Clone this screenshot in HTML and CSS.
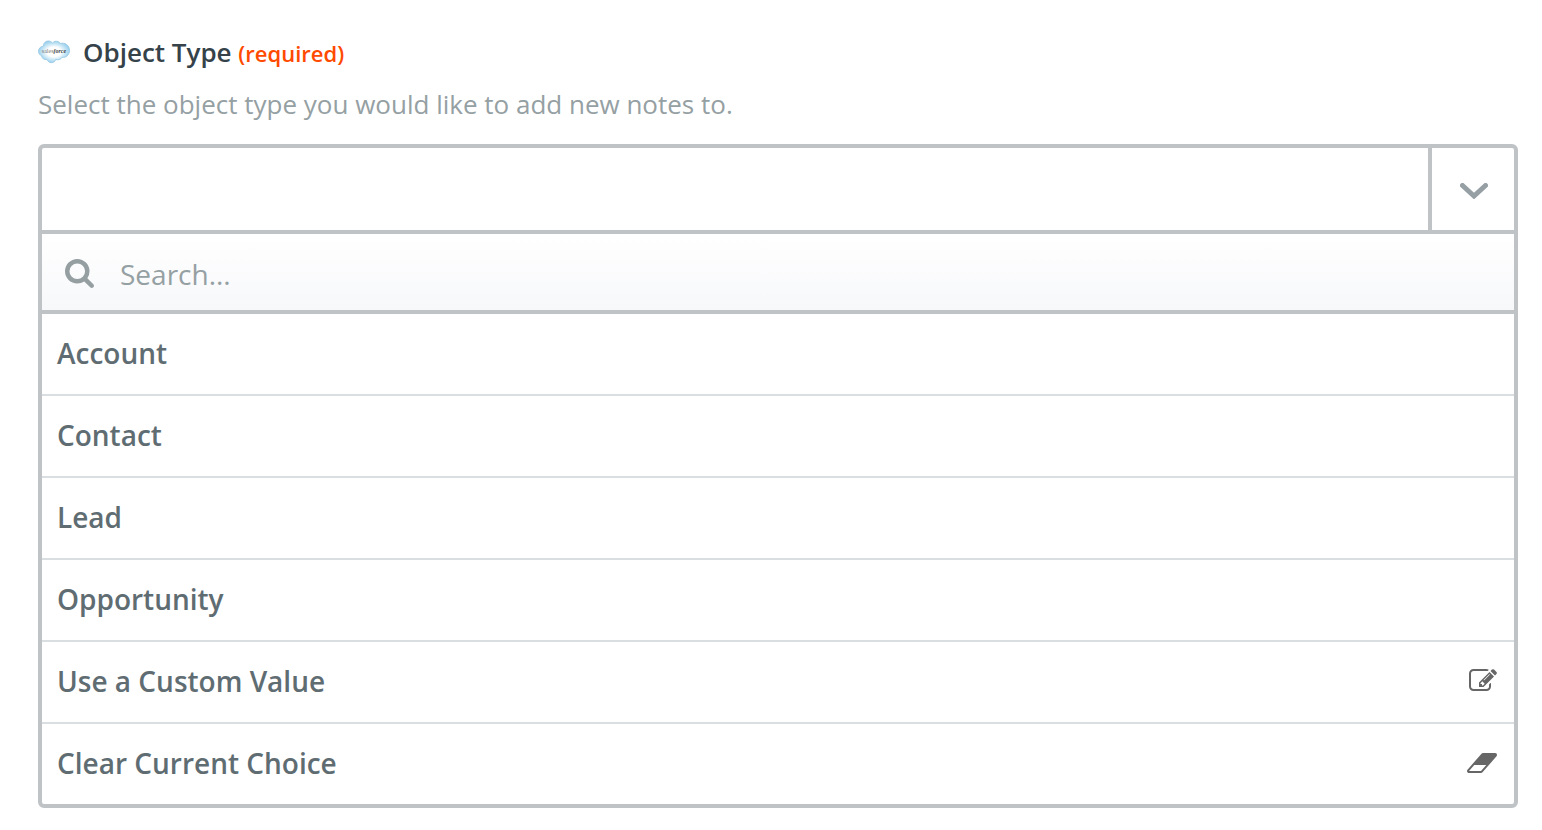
FILE: index.html
```html
<!DOCTYPE html>
<html lang="en">
<head>
<meta charset="utf-8">
<title>Object Type</title>
<link rel="stylesheet" href="styles.css">
</head>
<body>
<main class="field">
  <div class="field-head">
    <svg class="logo" viewBox="0 0 32 24" aria-hidden="true">
      <defs>
        <radialGradient id="cloud" cx="50%" cy="50%" r="55%">
          <stop offset="0.4" stop-color="#ffffff"/>
          <stop offset="0.7" stop-color="#c3e4f5"/>
          <stop offset="1" stop-color="#8cc8e8"/>
        </radialGradient>
      </defs>
      <path d="M5.500 6C5.500 2.500 8 1 10.500 1C12.500 1 13.500 2 14.500 3C15.500 1.800 17 1.200 18.500 1.300C20.500 1.400 21.500 2.200 22.300 3.600C27 2 31.500 5.500 31.500 10.300C31.500 15 28 18 24 17.200C23.200 19.300 20 20.500 17.800 19.400C16.500 23.500 10.500 24 9 19.300C6 20 3.800 18.300 3.700 15.800C1.600 15 .5 13.200 .5 11.200C.5 8.600 2.500 6.500 5.500 6Z" fill="url(#cloud)" stroke="#9dcde8"/>
      <text class="logo-text" x="16" y="13" text-anchor="middle">sales<tspan class="logo-force">force</tspan></text>
    </svg>
    <label class="field-label" for="object-type">Object Type <span class="required">(required)</span></label>
  </div>
  <p class="hint">Select the object type you would like to add new notes to.</p>
  <div class="picker">
    <div class="picker-value">
      <input class="value-input" id="object-type" type="text" readonly>
      <button class="toggle" type="button" aria-label="Toggle choices" aria-expanded="true">
        <svg class="chevron" viewBox="0 0 28 16" aria-hidden="true"><path d="M2.500 2.500L14 13L25.500 2.500"/></svg>
      </button>
    </div>
    <div class="picker-search">
      <svg class="search-icon" viewBox="64 128 1664 1664" aria-hidden="true"><path d="M1216 832q0-185-131.500-316.500t-316.500-131.500-316.500 131.500-131.500 316.500 131.500 316.500 316.500 131.500 316.500-131.500 131.500-316.500zm512 832q0 52-38 90t-90 38q-54 0-90-38l-343-342q-179 124-399 124-143 0-273.500-55.500t-225-150-150-225-55.500-273.500 55.500-273.500 150-225 225-150 273.500-55.500 273.500 55.500 225 150 150 225 55.500 273.500q0 220-124 399l343 343q37 37 37 90z"/></svg>
      <input class="search-input" type="text" placeholder="Search..." aria-label="Search">
    </div>
    <ul class="choices">
      <li class="choice-row"><button class="choice" type="button">Account</button></li>
      <li class="choice-row"><button class="choice" type="button">Contact</button></li>
      <li class="choice-row"><button class="choice" type="button">Lead</button></li>
      <li class="choice-row"><button class="choice" type="button">Opportunity</button></li>
      <li class="choice-row"><button class="choice" type="button">Use a Custom Value
        <svg class="choice-icon" viewBox="0 64 1792 1664" aria-hidden="true"><path d="M888 1184l116-116-152-152-116 116v56h96v96h56zm440-720q-16-16-33 1l-350 350q-17 17-1 33t33-1l350-350q17-17 1-33zm80 594v190q0 119-84.500 203.500t-203.500 84.500h-832q-119 0-203.500-84.500t-84.500-203.500v-832q0-119 84.500-203.500t203.500-84.500h832q63 0 117 25 15 7 18 23 3 17-9 29l-49 49q-14 14-32 8-23-6-45-6h-832q-66 0-113 47t-47 113v832q0 66 47 113t113 47h832q66 0 113-47t47-113v-126q0-13 9-22l64-64q15-15 35-7t20 29zm-96-738l288 288-672 672h-288v-288zm444 132l-92 92-288-288 92-92q28-28 68-28t68 28l152 152q28 28 28 68t-28 68z"/></svg></button></li>
      <li class="choice-row"><button class="choice" type="button">Clear Current Choice
        <svg class="choice-icon choice-icon-wide" viewBox="0 64 1920 1664" aria-hidden="true"><path d="M896 1408l336-384h-768l-336 384h768zm1013-1077q15 34 9.500 71.500t-30.500 65.500l-896 1024q-38 44-96 44h-768q-38 0-69.500-20.500t-47.500-54.500q-15-34-9.500-71.500t30.500-65.500l896-1024q38-44 96-44h768q38 0 69.500 20.500t47.500 54.500z"/></svg></button></li>
    </ul>
  </div>
</main>
</body>
</html>
```
FILE: styles.css
```css
* {
  box-sizing: border-box;
}

body {
  margin: 0;
  background: #fff;
  font-family: "Open Sans", "Noto Sans", sans-serif;
}

input,
button {
  margin: 0;
  border: 0;
  background: none;
  font-family: inherit;
}

.field {
  padding: 32px 24px 22px 38px;
}

.field-head {
  display: flex;
  align-items: center;
  gap: 13px;
  height: 40px;
}

.logo {
  width: 32px;
  height: 24px;
}

.logo-text {
  font-family: "Liberation Serif", serif;
  font-size: 6px;
  fill: #777;
}

.logo-force {
  font-style: italic;
  font-weight: 600;
  fill: #444;
}

.field-label {
  font-size: 26px;
  line-height: 40px;
  font-weight: 600;
  color: #354249;
}

.required {
  font-size: 22px;
  color: #ff4a00;
}

.hint {
  margin: 12px 0 20px;
  font-size: 26px;
  line-height: 40px;
  color: #95a0a3;
}

.picker {
  border: 4px solid #bfc3c6;
  border-radius: 6px;
}

.picker-value {
  display: flex;
  height: 86px;
  border-bottom: 4px solid #bfc3c6;
}

.value-input {
  flex: 1;
  min-width: 0;
  padding: 0 16px;
  font-size: 28px;
  outline: 0;
}

.toggle {
  display: flex;
  align-items: center;
  justify-content: center;
  width: 86px;
  padding: 3px 0 0 2px;
  border-left: 4px solid #bfc3c6;
}

.chevron {
  width: 28px;
  height: 16px;
  fill: none;
  stroke: #959fa4;
  stroke-width: 5;
  stroke-linecap: round;
}

.picker-search {
  display: flex;
  align-items: center;
  gap: 26px;
  height: 80px;
  padding: 3px 23px 0;
  border-bottom: 4px solid #bfc3c6;
  background: linear-gradient(#fff, #f7f8fa);
}

.search-icon {
  width: 29px;
  height: 29px;
  fill: #959fa2;
}

.search-input {
  flex: 1;
  min-width: 0;
  padding: 0;
  font-size: 28px;
  line-height: 40px;
  outline: 0;
}

.search-input::placeholder {
  color: #95a0a3;
  opacity: 1;
}

.choices {
  margin: 0;
  padding: 0;
  list-style: none;
}

.choice-row + .choice-row {
  border-top: 2px solid #d9dee1;
}

.choice {
  display: flex;
  align-items: center;
  justify-content: space-between;
  width: 100%;
  padding: 19px 17px 21px 15px;
  font-size: 28px;
  line-height: 40px;
  font-weight: 600;
  text-align: left;
  color: #5f6d73;
}

.choice-icon {
  width: 28px;
  height: 26px;
  fill: #666;
}

.choice-icon-wide {
  width: 30px;
}
```
